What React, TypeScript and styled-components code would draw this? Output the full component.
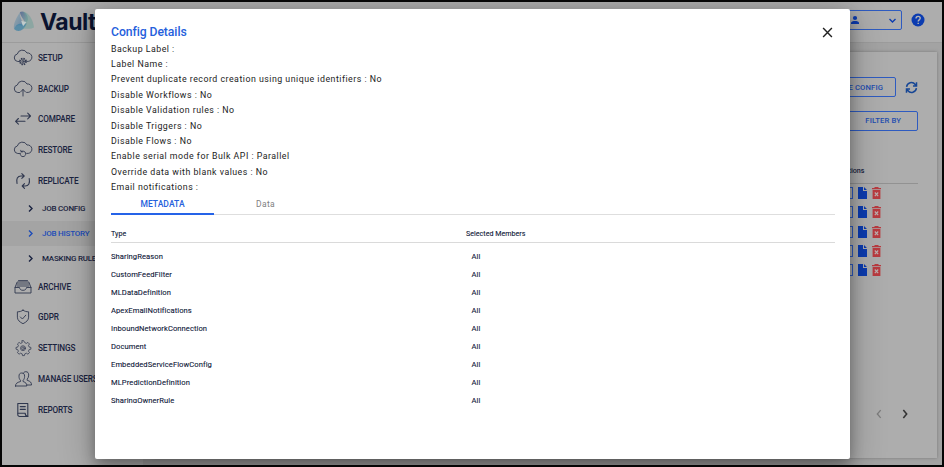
import React from 'react';
import styled, { createGlobalStyle } from 'styled-components';

const Global = createGlobalStyle`
  * { box-sizing: border-box; }
  body { margin: 0; font-family: Roboto, "Liberation Sans", sans-serif; }
`;
const NAVY = '#1a2340';
const BLUE = '#0c3cb0';

const Frame = styled.div`
  position: relative; width: 944px; height: 467px; overflow: hidden;
  border: 2px solid #050505;
  background: #a3a3a3; color: ${NAVY};
  display: flex; flex-direction: column;
`;
const Header = styled.header`
  height: 40.5px; flex: none; display: flex; align-items: center; background: #adadad;
  border-bottom: 1px solid #9c9c9c; padding: 0 17px 3px 11px;
`;
const Brand = styled.span`
  font: 700 23px/26px Inter, sans-serif; letter-spacing: -0.5px; margin-left: 5px; margin-top: 3px; color: #0b1430;
`;
const Spacer = styled.div`flex: 1;`;
const UserSelect = styled.div`
  width: 70px; height: 20px; border: 1px solid #2e5bc0; border-radius: 2px; margin-right: 9px;
  display: flex; align-items: center; justify-content: space-between; padding: 0 4px 0 17px;
`;
const Body = styled.div`flex: 1; display: flex; min-height: 0;`;
const Sidebar = styled.nav`width: 141px; background: #adadad; flex: none;`;
const NavItem = styled.div<{ $sub?: boolean; $active?: boolean }>`
  height: ${p => (p.$sub ? 25 : 30.75)}px; display: flex; align-items: center;
  padding-left: ${p => (p.$sub ? 24 : 10)}px; gap: ${p => (p.$sub ? 7 : 4)}px;
  font-size: ${p => (p.$sub ? 8 : 8.2)}px; font-weight: 500; white-space: nowrap;
  letter-spacing: ${p => (p.$sub ? -0.22 : -0.14)}px;
  color: ${p => (p.$active ? '#1d4cb8' : NAVY)};
  background: ${p => (p.$active ? '#a4a4a4' : 'transparent')};
`;
const IconBox = styled.span<{ $w: number }>`
  width: ${p => p.$w}px; display: flex; justify-content: center; align-items: center; flex: none;
`;
const Main = styled.main`flex: 1; padding: 9px 5px 7px 10px; display: flex;`;
const Card = styled.section`
  flex: 1; background: #adadad; box-shadow: 0 0 3px #777; display: flex; flex-direction: column;
  align-items: flex-end; padding: 25.5px 19px 0 0;
`;
const ButtonRow = styled.div`display: flex; align-items: center; gap: 9px; height: 20px;`;
const OutlineButton = styled.div<{ $pad: number }>`
  width: 90px; height: 20px; border: 1px solid #2e5bc0; border-radius: 2px; color: #1d4cb0;
  font-size: 7.7px; font-weight: 500; letter-spacing: 0.1px; display: flex; align-items: center;
  justify-content: flex-end; padding-right: ${p => p.$pad}px; white-space: nowrap;
`;
const FilterRow = styled.div`margin-top: 13.5px; height: 20px;`;
const ActionsHead = styled.div`
  width: 130px; height: 28px; margin-top: 25px; border-bottom: 1px solid #929292;
  padding: 10px 0 0 52px; font-size: 7.2px; font-weight: 500; line-height: 10px;
`;
const ActionRow = styled.div`
  height: 19.25px; width: 91px; display: flex; align-items: center; gap: 5px;
`;
const EditBox = styled.span`width: 26px; height: 12px; border: 1px solid #2e5bc0;`;
const Pager = styled.div`
  margin-top: auto; height: 17px; margin-bottom: 36px; margin-right: 8px; display: flex; gap: 16px; align-items: center;
`;
const Modal = styled.div`
  position: absolute; left: 93px; top: 7px; width: 755px; height: 450px; background: #fff;
  border-radius: 2px; box-shadow: 0 6px 14px rgba(0,0,0,.3), 0 8px 34px 2px rgba(0,0,0,.25);
  padding: 13px 15px 0 16px; display: flex; flex-direction: column;
`;
const TitleBar = styled.div`
  display: flex; justify-content: space-between; align-items: center; height: 19.6px; flex: none;
`;
const Title = styled.h1`
  margin: 0; font-size: 12.2px; line-height: 18px; font-weight: 500; color: #2560dc; letter-spacing: -0.07px;
`;
const Close = styled.svg`width: 11px; height: 11px; margin-right: 2px; margin-top: 1px;`;
const Detail = styled.div`
  height: 15.42px; line-height: 15.4px; font-size: 8.8px; letter-spacing: 0.49px; color: #1c1c1c; flex: none;
`;
const Tabs = styled.div`
  display: flex; height: 20px; margin-top: -0.8px; flex: none; border-bottom: 1px solid #dedede; font-size: 8.5px;
`;
const Tab = styled.div<{ $on?: boolean }>`
  width: 103px; height: 20px; line-height: 19.5px; text-align: center; letter-spacing: ${p => (p.$on ? 0.05 : 0.3)}px;
  color: ${p => (p.$on ? '#2560dc' : '#808080')}; font-weight: ${p => (p.$on ? 500 : 400)};
  border-bottom: ${p => (p.$on ? '2px solid #2563e8' : '0')};
`;
const TableRow = styled.div<{ $head?: boolean }>`
  display: grid; grid-template-columns: ${p => (p.$head ? '355px' : '360.5px')} 1fr; flex: none;
  height: ${p => (p.$head ? 28 : 18)}px; line-height: ${p => (p.$head ? 38 : 18)}px;
  border-bottom: ${p => (p.$head ? '1px solid #dadada' : '0')};
  font-size: ${p => (p.$head ? 7.1 : 7.6)}px; letter-spacing: ${p => (p.$head ? 0.03 : 0.07)}px; color: #10193a;
  -webkit-text-stroke: 0.1px #10193a;
`;
const TableBody = styled.div`height: 160px; overflow: hidden; padding-top: 5px;`;

const cloud = <path d="M6.5 12.5H4.8A3.8 3.8 0 0 1 4.3 5 5.2 5.2 0 0 1 14 4a3.9 3.9 0 0 1 1.3 8.4h-1.6" />;
const NavIcon = ({ name }: { name: string }) => (
  <svg width="20" height="18" viewBox="0 0 20 18" fill="none" stroke="#30384f" strokeWidth="0.9" strokeLinecap="round" strokeLinejoin="round">
    {['SETUP', 'BACKUP', 'RESTORE'].includes(name) && cloud}
    {name === 'SETUP' && <><circle cx="10" cy="12.5" r="3.1" strokeDasharray="1.4 1.04" strokeLinecap="butt" strokeWidth="1.5" /><circle cx="10" cy="12.5" r="2.4" strokeWidth=".6" /><circle cx="10" cy="12.5" r="1" /></>}
    {name === 'BACKUP' && <path d="M10 16V9.5M7.5 12 10 9.4l2.5 2.6" />}
    {name === 'RESTORE' && <path d="M7.2 12.2a2.8 2.8 0 1 0 1.2-1.7M7.8 9.3l.3 1.6 1.7-.1" />}
    {name === 'COMPARE' && <path strokeWidth="1.1" d="M8 6h9.5M14.7 3.2l2.8 2.8-2.8 2.8M12 11.3H2.6M5.4 8.5l-2.8 2.8 2.8 2.8" />}
    {name === 'REPLICATE' && <path strokeWidth="1.1" d="M4 11.5C3 7 4.5 4 8 4h3M8.8 1.6 11.2 4 8.8 6.4M16.2 6.5c1 4.5-.5 7.5-4 7.5H9.3M11.5 11.6 9.2 14l2.3 2.4" />}
    {name === 'ARCHIVE' && <><path d="M2 9.5 4.2 4h11.6L18 9.5V15H2V9.5h4.5c.4 2 1.4 2.8 3.5 2.8s3.1-.8 3.5-2.8H18" /><path d="M5.5 2.6h9M4.3 6h11.4M4 8h12" /></>}
    {name === 'GDPR' && <><path d="M10 2.2c1.8 1.2 3.5 1.6 5.6 1.6v5.4c0 3-2.4 4.9-5.6 6.5-3.2-1.6-5.6-3.5-5.6-6.5V3.8c2.1 0 3.8-.4 5.6-1.6Z" /><path d="m7.4 9 2 2 3.4-3.8" /></>}
    {name === 'SETTINGS' && <><path d="m8.9 2 .3 1.7-1.7.7-1.4-1L4.4 5l1 1.4-.7 1.7-1.7.3v1.8l1.7.4.7 1.6-1 1.4 1.7 1.6 1.4-1 1.7.7.3 1.7h1.9l.4-1.7 1.6-.7 1.5 1 1.6-1.6-1-1.4.7-1.7 1.7-.3V8.4l-1.7-.3-.7-1.7 1-1.4-1.6-1.6-1.5 1-1.6-.7L10.8 2Z" strokeWidth=".75" /><circle cx="10" cy="9.2" r="2.5" strokeWidth=".7" /><circle cx="10" cy="9.2" r="1.3" strokeWidth=".7" /></>}
    {name === 'MANAGE USERS' && <><path d="M2.5 16h11.3c0-2.7-1-3.4-3.7-4.5v-1.2c1-1 1.5-2.1 1.5-4C11.6 4 10.7 3 8.8 3S6 4 6 6.3c0 1.9.5 3 1.5 4v1.2c-3.5 1.1-5 1.8-5 4.5Z" /><path d="M10.4 3c.5-.8 1.3-1.3 2.4-1.3 2 0 2.9 1.2 2.9 3.4 0 1.8-.6 3-1.5 4v1.2c3.1 1 4.3 2 4.3 4.7h-4.6" /></>}
    {name === 'REPORTS' && <><path strokeWidth="1.1" d="M5.2 2.5h9.6v13H6.6a1.8 1.8 0 0 1-1.8-1.8V2.5Z" /><path strokeWidth="1.1" d="M7.3 5.6h5M7.3 8.4h5M5 12.3h7.2c0 1.8.8 3 2.6 3" /></>}
  </svg>
);
const Chevron = ({ d = 'm3 1.5 3 3-3 3', color = NAVY, size = 9, w = 1.4 }) => (
  <svg width={size} height={size} viewBox="0 0 9 9" fill="none" stroke={color} strokeWidth={w}><path d={d} /></svg>
);
const Logo = () => (
  <svg width="22" height="24" viewBox="0 0 22 24">
    <defs>
      <linearGradient id="a" x2="1" y2="1"><stop stopColor="#8fa8b0" /><stop offset="1" stopColor="#34699a" /></linearGradient>
      <linearGradient id="b" x2="1" y2="1"><stop stopColor="#3c568b" /><stop offset="1" stopColor="#75a89c" /></linearGradient>
    </defs>
    <g transform="translate(0 1)">
      <path d="M7 3c4-2 8 2 8 8l-3 5C12 10 7 8 7 3Z" fill="url(#b)" opacity=".7" />
      <path d="M7 3C4 8 0 14 1 20c2-3 4-5 9-3 0-5-4-9-3-14Z" fill="url(#a)" opacity=".6" />
      <path d="M1 20c4 4 10 2 13-6l-4 2c-4-3-7 0-9 4Z" fill="#3e81a4" opacity=".75" />
      <path d="M10 2.5c6 1 10 8 11 16-3 2-8 1-12 1 5-2 6-10 1-17Z" fill="#6ba098" opacity=".5" />
      <path d="m8.2 12 5.2 1-3.3 4.3Z" fill="#c0cccc" />
    </g>
  </svg>
);

const nav = ['SETUP', 'BACKUP', 'COMPARE', 'RESTORE', 'REPLICATE', '>JOB CONFIG', '>JOB HISTORY', '>MASKING RULES', 'ARCHIVE', 'GDPR', 'SETTINGS', 'MANAGE USERS', 'REPORTS'];
const details = [
  'Backup Label :', 'Label Name :', 'Prevent duplicate record creation using unique identifiers : No',
  'Disable Workflows : No', 'Disable Validation rules : No', 'Disable Triggers : No', 'Disable Flows : No',
  'Enable serial mode for Bulk API : Parallel', 'Override data with blank values : No', 'Email notifications :',
];
const types = ['SharingReason', 'CustomFeedFilter', 'MLDataDefinition', 'ApexEmailNotifications', 'InboundNetworkConnection', 'Document', 'EmbeddedServiceFlowConfig', 'MLPredictionDefinition', 'SharingOwnerRule'];

export default function App() {
  return (
    <>
      <Global />
      <Frame>
        <Header>
          <Logo />
          <Brand>Vault</Brand>
          <Spacer />
          <UserSelect>
            <svg width="10" height="10" viewBox="0 0 10 10" fill={BLUE}><circle cx="5" cy="3" r="2.1" /><path d="M1 9V7.8C1 6.4 3 5.9 5 5.9s4 .5 4 1.9V9Z" /></svg>
            <Chevron d="m1.5 3 3 3 3-3" color={BLUE} />
          </UserSelect>
          <svg width="14" height="14" viewBox="0 0 14 14"><circle cx="7" cy="7" r="6.5" fill={BLUE} /><path d="M5 5.6C5 4.2 5.8 3.4 7.1 3.4s2.1.8 2.1 1.9c0 1.6-2 1.6-2 3.2M7.2 9.7v1.4" fill="none" stroke="#b5b5b5" strokeWidth="1.4" /></svg>
        </Header>
        <Body>
          <Sidebar>
            {nav.map(n => {
              const sub = n[0] === '>';
              const label = sub ? n.slice(1) : n;
              const active = label === 'JOB HISTORY';
              return (
                <NavItem key={n} $sub={sub} $active={active}>
                  {sub ? <Chevron color={active ? '#1d4cb8' : NAVY} /> : <IconBox $w={22}><NavIcon name={n} /></IconBox>}
                  {label}
                </NavItem>
              );
            })}
          </Sidebar>
          <Main>
            <Card>
              <ButtonRow>
                <OutlineButton $pad={12}>SAVE CONFIG</OutlineButton>
                <svg width="13" height="13" viewBox="0 0 14 14" fill="none" stroke="#164695" strokeWidth="1.6"><path d="M1.7 6.3A5.2 5.2 0 0 1 11 3.8l1 1.2M12.4 1.3v4H8.6M12.3 7.7A5.2 5.2 0 0 1 3 10.2L2 9M1.6 12.7v-4h3.8" /></svg>
              </ButtonRow>
              <FilterRow><OutlineButton $pad={16}>FILTER BY</OutlineButton></FilterRow>
              <ActionsHead>Actions</ActionsHead>
              {[0, 1, 2, 3, 4].map(i => (
                <ActionRow key={i}>
                  <EditBox />
                  <svg width="9" height="12" viewBox="0 0 9 12"><path d="M0 0h5v4h4v8H0ZM6 0l3 3H6Z" fill={BLUE} /></svg>
                  <svg width="9" height="12" viewBox="0 0 9 12"><path d="M0 1h2.5V0h4v1H9v1.3H0ZM.6 3h7.8v9H.6Z" fill="#b93b40" /><path d="m2.8 5.5 3.4 3.6m0-3.6L2.8 9.1" stroke="#bdb0b0" strokeWidth="1.2" /></svg>
                </ActionRow>
              ))}
              <Pager>
                <Chevron d="m6 1-3 3.5L6 8" color="#7c7c7c" size={10} w={1.2} />
                <Chevron d="m3 1 3 3.5L3 8" color="#333" size={10} />
              </Pager>
            </Card>
          </Main>
        </Body>
        <Modal>
          <TitleBar>
            <Title>Config Details</Title>
            <Close viewBox="0 0 10 10"><path d="m1 1 8 8m0-8L1 9" stroke="#222" strokeWidth="1.3" /></Close>
          </TitleBar>
          {details.map(d => <Detail key={d}>{d}</Detail>)}
          <Tabs><Tab $on>METADATA</Tab><Tab>Data</Tab></Tabs>
          <TableRow $head><span>Type</span><span>Selected Members</span></TableRow>
          <TableBody>
            {types.map(t => <TableRow key={t}><span>{t}</span><span>All</span></TableRow>)}
          </TableBody>
        </Modal>
      </Frame>
    </>
  );
}
